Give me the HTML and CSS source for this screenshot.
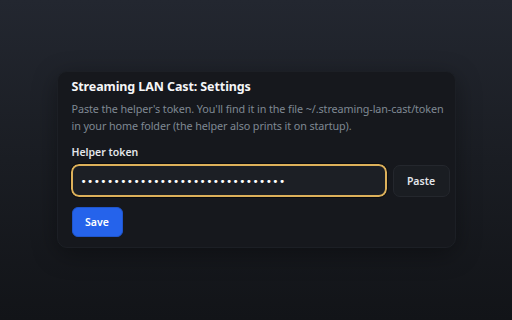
FILE: index.html
```html
<!DOCTYPE html>
<html>
<head>
<meta charset="utf-8">
<link rel="stylesheet" href="styles.css">
</head>
<body>
<main class="card">
  <h1 class="title">Streaming LAN Cast: Settings</h1>
  <p class="desc">Paste the helper's token. You'll find it in the file ~/.streaming-lan-cast/token in your home folder (the helper also prints it on startup).</p>
  <label class="label" for="tok">Helper token</label>
  <div class="row">
    <input id="tok" class="token" type="password" value="abcdefghijklmnopqrstuvwxyz01234">
    <button class="btn paste">Paste</button>
  </div>
  <button class="btn save">Save</button>
</main>
</body>
</html>
```
FILE: styles.css
```css
html, body {
  margin: 0;
  height: 100%;
}
body {
  background: linear-gradient(180deg, #232730 0%, #1a1d23 50%, #121418 100%);
  font-family: "Noto Sans", "Open Sans", sans-serif;
  display: flex;
  align-items: center;
  justify-content: center;
}
.card {
  box-sizing: border-box;
  width: 399px;
  height: 177px;
  margin-top: -1px;
  background: #16181d;
  border: 1px solid #1c1f25;
  border-radius: 10px;
  padding: 6px 5px 10px 14px;
  box-shadow: 0 6px 24px rgba(0,0,0,0.35);
  display: flex;
  flex-direction: column;
}
.title {
  margin: 0;
  font-size: 12.5px;
  letter-spacing: -0.1px;
  line-height: 18px;
  font-weight: 700;
  color: #f5f6f8;
}
.desc {
  margin: 4px 0 0;
  padding-right: 4px;
  font-size: 10.8px;
  letter-spacing: -0.1px;
  line-height: 17px;
  color: #7f8893;
}
.label {
  margin-top: 11px;
  font-size: 10.5px;
  line-height: 15px;
  font-weight: 600;
  color: #e4e6ea;
}
.row {
  margin-top: 4px;
  display: flex;
  gap: 6px;
  align-items: center;
}
.token {
  box-sizing: border-box;
  width: 316px;
  height: 33px;
  margin-left: -1px;
  border: 2px solid #dcb05a;
  border-radius: 8px;
  background: #1c1f25;
  color: #ffffff;
  padding: 0 8px;
  font-family: "DejaVu Sans", sans-serif;
  font-size: 10.5px;
  letter-spacing: 0.42px;
  outline: 1px solid #0b0c0f;
}
.btn {
  font-family: "Noto Sans", "Open Sans", sans-serif;
  font-weight: 600;
  font-size: 10.5px;
  cursor: pointer;
}
.paste {
  box-sizing: border-box;
  width: 57px;
  height: 32px;
  background: #1a1d22;
  border: 1px solid #24272d;
  border-radius: 7px;
  color: #e2e5ea;
}
.save {
  align-self: flex-start;
  margin-top: 10px;
  box-sizing: border-box;
  width: 51px;
  height: 31px;
  background: #2563eb;
  border: 1px solid #1f55cc;
  border-radius: 6px;
  color: #ffffff;
}
```
